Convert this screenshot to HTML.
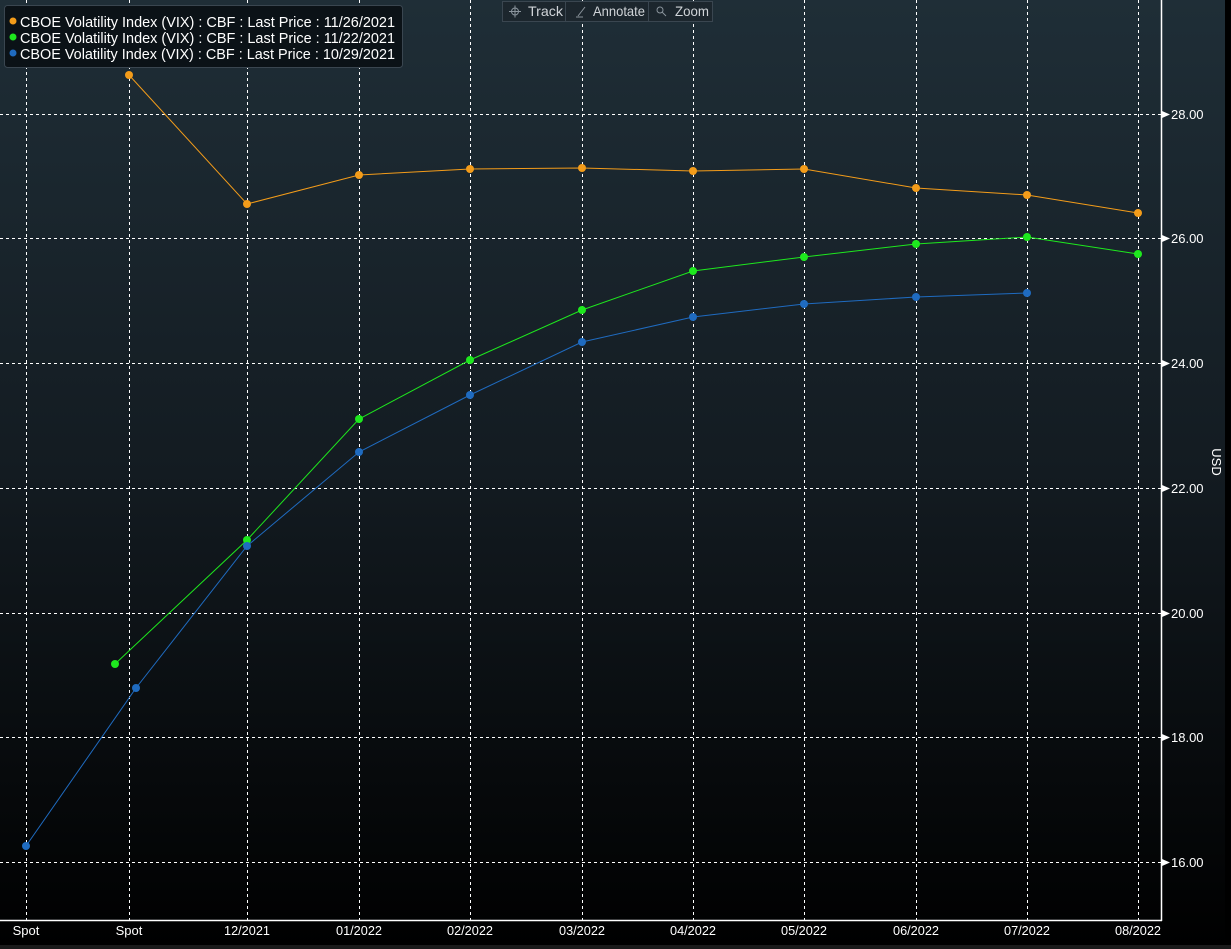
<!DOCTYPE html>
<html><head><meta charset="utf-8"><style>
html,body{margin:0;padding:0;background:#000;}
svg{display:block;font-family:"Liberation Sans",sans-serif;}
</style></head><body>
<svg width="1231" height="949" viewBox="0 0 1231 949" xmlns="http://www.w3.org/2000/svg">
<defs>
<linearGradient id="bg" x1="0" y1="0" x2="0" y2="1">
<stop offset="0" stop-color="#1f2e37"/>
<stop offset="0.5" stop-color="#131b21"/>
<stop offset="1" stop-color="#000"/>
</linearGradient>
</defs>
<rect x="0" y="0" width="1225" height="949" fill="url(#bg)"/>
<rect x="1225" y="0" width="6" height="949" fill="#000"/>
<rect x="0" y="945" width="1231" height="4" fill="#1a1a1a"/>
<g stroke="#fff" stroke-width="1" stroke-dasharray="3,3" fill="none">
<line x1="26.5" y1="0" x2="26.5" y2="920"/>
<line x1="129.5" y1="0" x2="129.5" y2="920"/>
<line x1="247.5" y1="0" x2="247.5" y2="920"/>
<line x1="359.5" y1="0" x2="359.5" y2="920"/>
<line x1="470.5" y1="0" x2="470.5" y2="920"/>
<line x1="582.5" y1="0" x2="582.5" y2="920"/>
<line x1="693.5" y1="0" x2="693.5" y2="920"/>
<line x1="804.5" y1="0" x2="804.5" y2="920"/>
<line x1="916.5" y1="0" x2="916.5" y2="920"/>
<line x1="1027.5" y1="0" x2="1027.5" y2="920"/>
<line x1="1138.5" y1="0" x2="1138.5" y2="920"/>
<line x1="0" y1="114.5" x2="1161" y2="114.5"/>
<line x1="0" y1="238.5" x2="1161" y2="238.5"/>
<line x1="0" y1="363.5" x2="1161" y2="363.5"/>
<line x1="0" y1="488.5" x2="1161" y2="488.5"/>
<line x1="0" y1="613.5" x2="1161" y2="613.5"/>
<line x1="0" y1="737.5" x2="1161" y2="737.5"/>
<line x1="0" y1="862.5" x2="1161" y2="862.5"/>
</g>
<line x1="1161.5" y1="0" x2="1161.5" y2="921" stroke="#fff" stroke-width="1.5"/>
<line x1="0" y1="920.5" x2="1162" y2="920.5" stroke="#fff" stroke-width="1.5"/>
<g fill="#fff" font-size="13">
<g>
<polygon points="1162,111 1170,114.5 1162,118"/><text x="1171" y="119">28.00</text>
<polygon points="1162,235 1170,238.5 1162,242"/><text x="1171" y="243">26.00</text>
<polygon points="1162,360 1170,363.5 1162,367"/><text x="1171" y="368">24.00</text>
<polygon points="1162,485 1170,488.5 1162,492"/><text x="1171" y="493">22.00</text>
<polygon points="1162,610 1170,613.5 1162,617"/><text x="1171" y="618">20.00</text>
<polygon points="1162,734 1170,737.5 1162,741"/><text x="1171" y="742">18.00</text>
<polygon points="1162,859 1170,862.5 1162,866"/><text x="1171" y="867">16.00</text>
</g>
<text transform="translate(1212,462) rotate(90)" text-anchor="middle" font-size="13">USD</text>
<g text-anchor="middle">
<text x="26" y="935">Spot</text>
<text x="129" y="935">Spot</text>
<text x="247" y="935" textLength="46" lengthAdjust="spacingAndGlyphs">12/2021</text>
<text x="359" y="935" textLength="46" lengthAdjust="spacingAndGlyphs">01/2022</text>
<text x="470" y="935" textLength="46" lengthAdjust="spacingAndGlyphs">02/2022</text>
<text x="582" y="935" textLength="46" lengthAdjust="spacingAndGlyphs">03/2022</text>
<text x="693" y="935" textLength="46" lengthAdjust="spacingAndGlyphs">04/2022</text>
<text x="804" y="935" textLength="46" lengthAdjust="spacingAndGlyphs">05/2022</text>
<text x="916" y="935" textLength="46" lengthAdjust="spacingAndGlyphs">06/2022</text>
<text x="1027" y="935" textLength="46" lengthAdjust="spacingAndGlyphs">07/2022</text>
<text x="1138" y="935" textLength="46" lengthAdjust="spacingAndGlyphs">08/2022</text>
</g>
</g>
<polyline fill="none" stroke="#f39c1a" stroke-width="1" points="129,75 247,204 359,175 470,169 582,168 693,171 804,169 916,188 1027,195 1138,213"/>
<polyline fill="none" stroke="#1ee81e" stroke-width="1" points="115,664 247,540 359,419 470,360 582,310 693,271 804,257 916,244 1027,237 1138,254"/>
<polyline fill="none" stroke="#1f6bc0" stroke-width="1" points="26,846 136,688 247,546 359,452 470,395 582,342 693,317 804,304 916,297 1027,293"/>
<g fill="#f39c1a"><circle cx="129" cy="75" r="4"/><circle cx="247" cy="204" r="4"/><circle cx="359" cy="175" r="4"/><circle cx="470" cy="169" r="4"/><circle cx="582" cy="168" r="4"/><circle cx="693" cy="171" r="4"/><circle cx="804" cy="169" r="4"/><circle cx="916" cy="188" r="4"/><circle cx="1027" cy="195" r="4"/><circle cx="1138" cy="213" r="4"/></g>
<g fill="#1ee81e"><circle cx="115" cy="664" r="4"/><circle cx="247" cy="540" r="4"/><circle cx="359" cy="419" r="4"/><circle cx="470" cy="360" r="4"/><circle cx="582" cy="310" r="4"/><circle cx="693" cy="271" r="4"/><circle cx="804" cy="257" r="4"/><circle cx="916" cy="244" r="4"/><circle cx="1027" cy="237" r="4"/><circle cx="1138" cy="254" r="4"/></g>
<g fill="#1f6bc0"><circle cx="26" cy="846" r="4"/><circle cx="136" cy="688" r="4"/><circle cx="247" cy="546" r="4"/><circle cx="359" cy="452" r="4"/><circle cx="470" cy="395" r="4"/><circle cx="582" cy="342" r="4"/><circle cx="693" cy="317" r="4"/><circle cx="804" cy="304" r="4"/><circle cx="916" cy="297" r="4"/><circle cx="1027" cy="293" r="4"/></g>
<rect x="4.5" y="5.5" width="398" height="62" rx="3" fill="#0b1217" stroke="#3a4650" stroke-width="1"/>
<g font-size="15" fill="#fff">
<circle cx="13" cy="21" r="3.5" fill="#f39c1a"/><text x="20" y="27" textLength="375" lengthAdjust="spacingAndGlyphs">CBOE Volatility Index (VIX) : CBF : Last Price : 11/26/2021</text>
<circle cx="13" cy="37" r="3.5" fill="#1ee81e"/><text x="20" y="43" textLength="375" lengthAdjust="spacingAndGlyphs">CBOE Volatility Index (VIX) : CBF : Last Price : 11/22/2021</text>
<circle cx="13" cy="53" r="3.5" fill="#1f6bc0"/><text x="20" y="59" textLength="375" lengthAdjust="spacingAndGlyphs">CBOE Volatility Index (VIX) : CBF : Last Price : 10/29/2021</text>
</g>
<rect x="502.5" y="1.5" width="210" height="20" fill="#1c262d" stroke="#3a4650"/>
<line x1="565.5" y1="2" x2="565.5" y2="21" stroke="#3a4650"/>
<line x1="648.5" y1="2" x2="648.5" y2="21" stroke="#3a4650"/>
<g stroke="#8a949c" stroke-width="1" fill="none">
<circle cx="515" cy="11.5" r="3.5"/><line x1="509" y1="11.5" x2="521" y2="11.5"/><line x1="515" y1="5.5" x2="515" y2="17.5"/>
<line x1="578" y1="16" x2="585" y2="7"/><line x1="576" y1="17" x2="583" y2="17"/>
<circle cx="660" cy="10" r="3"/><line x1="662" y1="12" x2="666" y2="16"/>
</g>
<g font-size="14" fill="#d0d4d8">
<text x="528" y="16" textLength="35" lengthAdjust="spacingAndGlyphs">Track</text>
<text x="593" y="16" textLength="52" lengthAdjust="spacingAndGlyphs">Annotate</text>
<text x="675" y="16" textLength="34" lengthAdjust="spacingAndGlyphs">Zoom</text>
</g>
</svg>
</body></html>
